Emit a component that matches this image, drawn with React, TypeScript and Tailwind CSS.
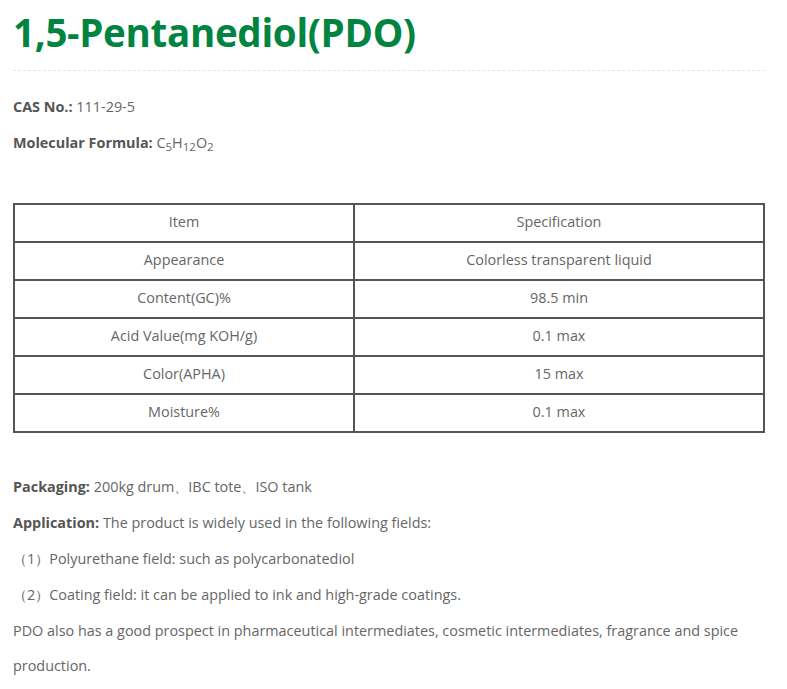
import React from "react";

const rows: [string, string][] = [
  ["Item", "Specification"],
  ["Appearance", "Colorless transparent liquid"],
  ["Content(GC)%", "98.5 min"],
  ["Acid Value(mg KOH/g)", "0.1 max"],
  ["Color(APHA)", "15 max"],
  ["Moisture%", "0.1 max"],
];

export default function App() {
  return (
    <div
      className="min-h-[689px] w-[787px] bg-white px-[13px] pt-[6px] text-[14.4px] text-[#666]"
      style={{ fontFamily: '"Open Sans", "Noto Sans", sans-serif' }}
    >
      <h1 className="text-[38.5px] font-bold leading-[52px] text-[#00843f] tracking-[-0.3px]">
        1,5-Pentanediol(PDO)
      </h1>
      <div className="mt-[12px] w-[752px] border-t border-dashed border-[#e6e6e6]" />
      <div className="mt-[18px] leading-[36px]">
        <p>
          <b className="font-bold text-[#555]">CAS No.:</b> 111-29-5
        </p>
        <p>
          <b className="font-bold text-[#555]">Molecular Formula:</b> C
          <sub className="text-[11.5px]">5</sub>H<sub className="text-[11.5px]">12</sub>O
          <sub className="text-[11.5px]">2</sub>
        </p>
      </div>
      <table className="mt-[42px] w-[752px] border-collapse border-2 border-[#555]">
        <tbody>
          {rows.map(([a, b]) => (
            <tr key={a} className="h-[38px]">
              <td className="w-[340px] border-2 border-[#555] pb-[3px] text-center">{a}</td>
              <td className="border-2 border-[#555] pb-[3px] text-center">{b}</td>
            </tr>
          ))}
        </tbody>
      </table>
      <div className="mt-[36px] leading-[36px]">
        <p>
          <b className="font-bold text-[#555]">Packaging:</b> 200kg drum、IBC tote、ISO tank
        </p>
        <p>
          <b className="font-bold text-[#555]">Application:</b> The product is widely used in the following fields:
        </p>
        <p>（1）Polyurethane field: such as polycarbonatediol</p>
        <p>（2）Coating field: it can be applied to ink and high-grade coatings.</p>
        <p className="leading-[35px]">
          PDO also has a good prospect in pharmaceutical intermediates, cosmetic intermediates, fragrance and spice production.
        </p>
      </div>
    </div>
  );
}
